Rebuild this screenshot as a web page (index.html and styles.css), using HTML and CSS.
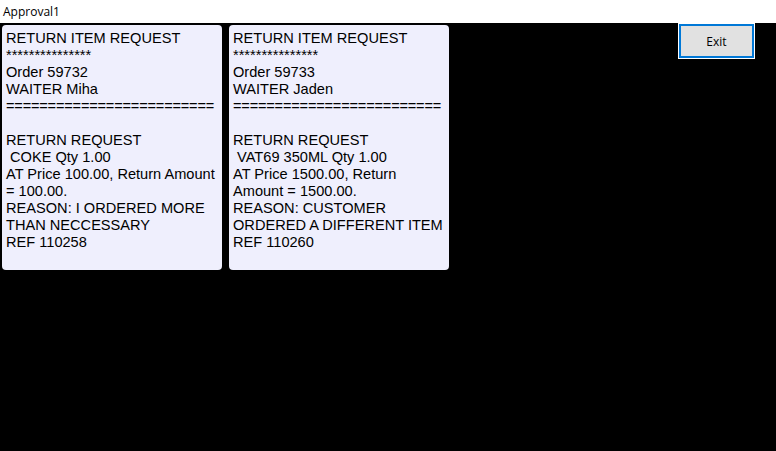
FILE: index.html
```html
<!DOCTYPE html>
<html>
<head>
<meta charset="utf-8">
<link rel="stylesheet" href="styles.css">
</head>
<body>
<div class="titlebar">Approval1</div>
<div class="main">
  <div class="cards">
    <div class="card">
      <div class="line">RETURN ITEM REQUEST</div>
      <div class="line">***************</div>
      <div class="line">Order 59732</div>
      <div class="line">WAITER Miha</div>
      <div class="line rule">=========================</div>
      <div class="line">&nbsp;</div>
      <div class="line">RETURN REQUEST</div>
      <div class="line">&nbsp;COKE Qty 1.00</div>
      <div class="line">AT Price 100.00, Return Amount = 100.00.</div>
      <div class="line">REASON: I ORDERED MORE THAN NECCESSARY</div>
      <div class="line">REF 110258</div>
    </div>
    <div class="card">
      <div class="line">RETURN ITEM REQUEST</div>
      <div class="line">***************</div>
      <div class="line">Order 59733</div>
      <div class="line">WAITER Jaden</div>
      <div class="line rule">=========================</div>
      <div class="line">&nbsp;</div>
      <div class="line">RETURN REQUEST</div>
      <div class="line">&nbsp;VAT69 350ML Qty 1.00</div>
      <div class="line">AT Price 1500.00, Return Amount = 1500.00.</div>
      <div class="line">REASON: CUSTOMER ORDERED A DIFFERENT ITEM</div>
      <div class="line">REF 110260</div>
    </div>
  </div>
  <button class="exit">Exit</button>
</div>
</body>
</html>
```
FILE: styles.css
```css
html, body {
  margin: 0;
  padding: 0;
  background: #000;
}
body {
  width: 776px;
  height: 451px;
  overflow: hidden;
}
.titlebar {
  height: 23px;
  background: #fff;
  color: #000;
  font-family: "Open Sans", "Noto Sans", sans-serif;
  font-size: 12px;
  line-height: 23px;
  padding-left: 3px;
  box-sizing: border-box;
}
.main {
  display: flex;
  align-items: flex-start;
  padding: 0 22px 0 2px;
}
.cards {
  display: flex;
  gap: 7px;
  margin-top: 2px;
}
.card {
  width: 220px;
  height: 245px;
  box-sizing: border-box;
  background: #efeffd;
  border-radius: 4px;
  padding: 5px 4px 0 4px;
  overflow: hidden;
  font-family: "Liberation Sans", Arial, sans-serif;
  font-size: 14.6px;
  line-height: 17px;
  color: #000;
}
.line {
  white-space: pre-wrap;
}
.rule {
  white-space: nowrap;
  letter-spacing: -0.2px;
}
.exit {
  margin-left: auto;
  width: 75px;
  height: 34px;
  box-sizing: border-box;
  background: #e1e1e1;
  border: 2px solid #0078d7;
  outline: 1px solid #fff;
  outline-offset: 0;
  font-family: "Open Sans", "Noto Sans", sans-serif;
  font-size: 12px;
  color: #000;
  padding: 0;
  margin-top: 1px;
}
```
